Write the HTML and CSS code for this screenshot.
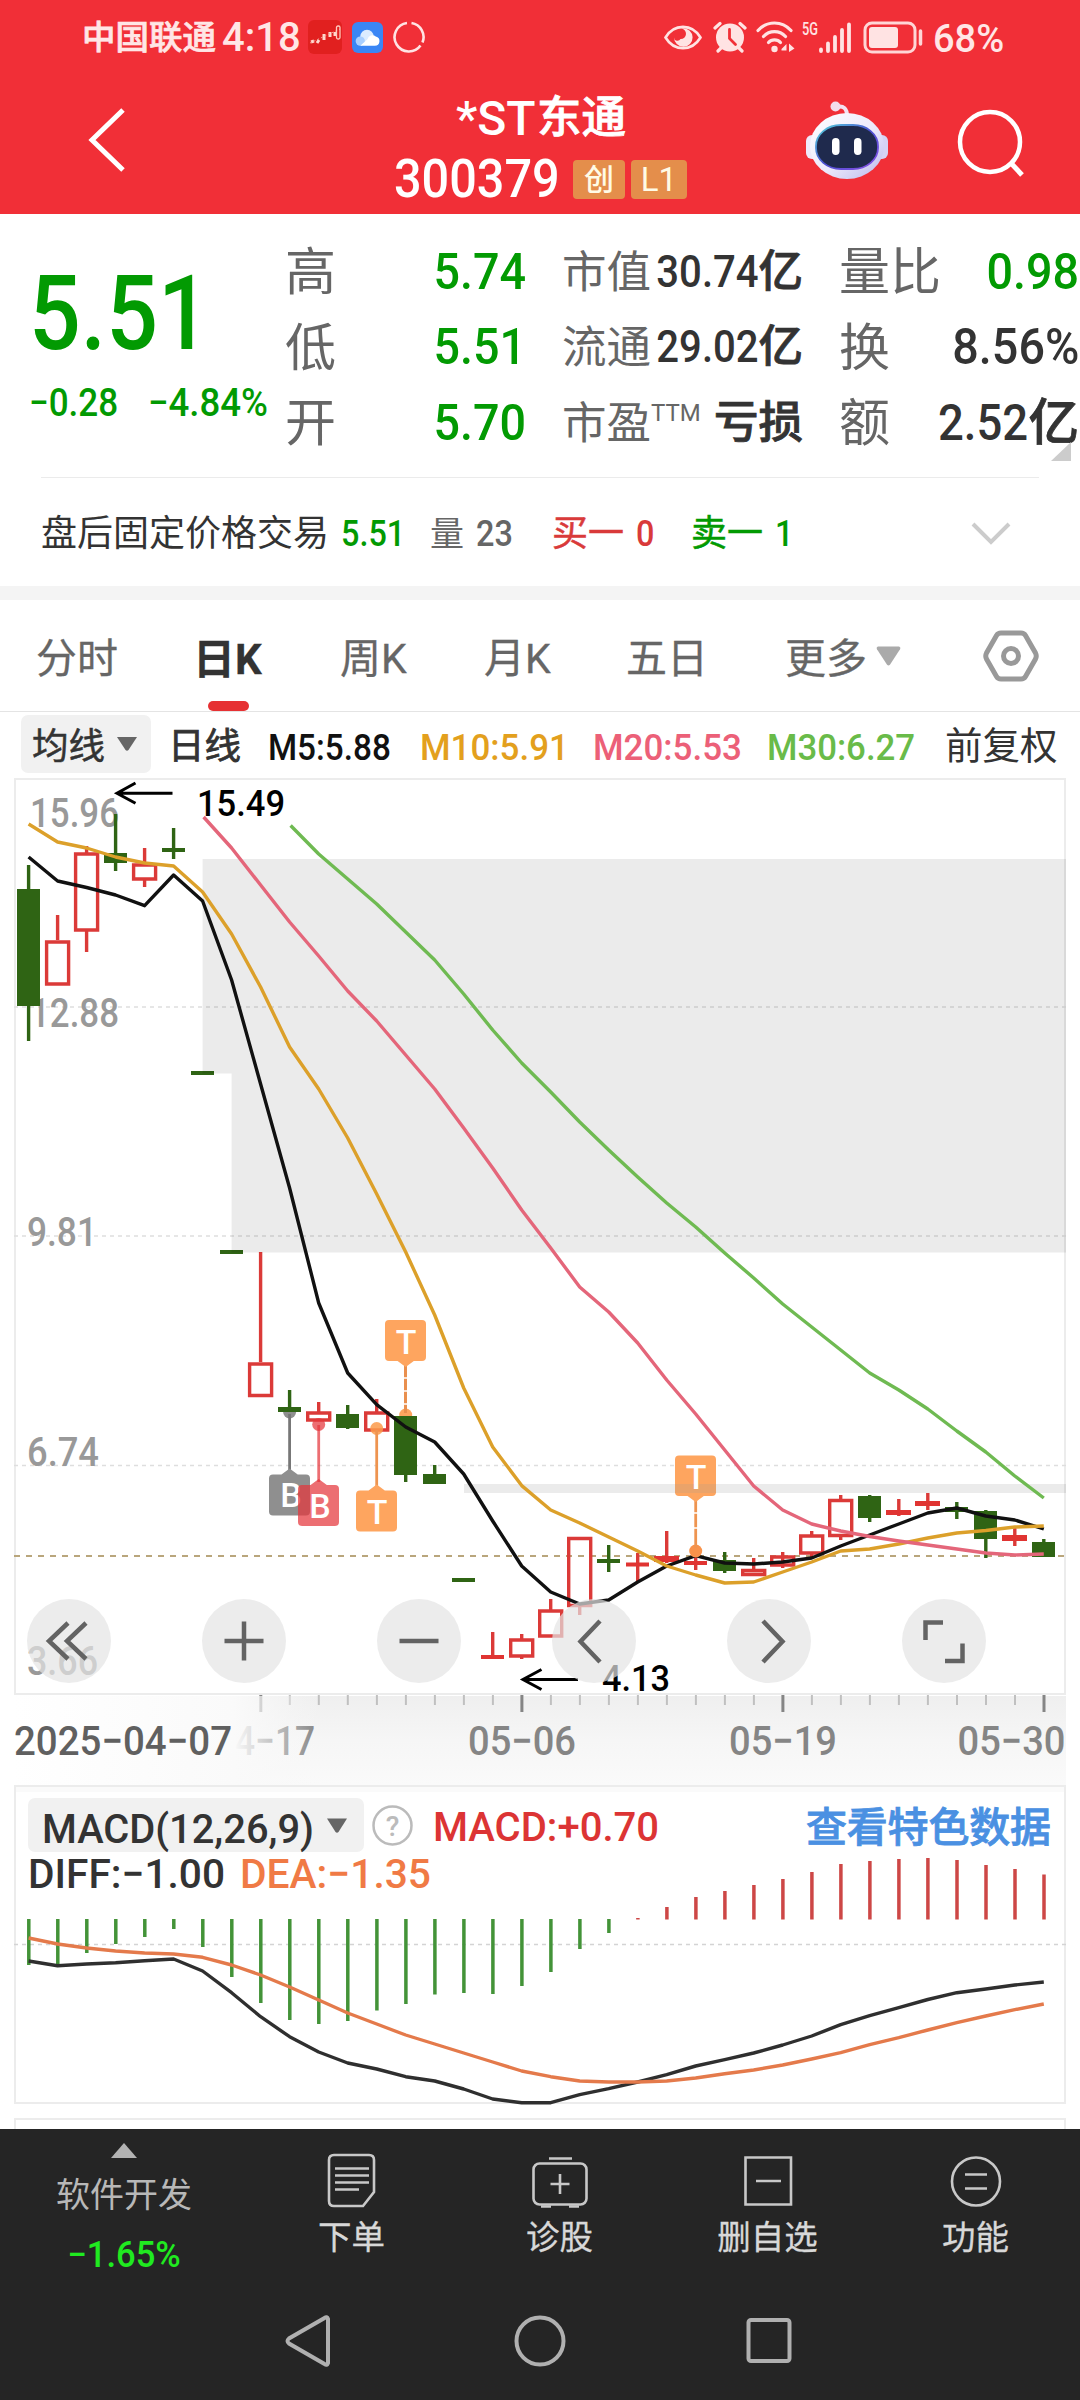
FILE: index.html
```html
<!DOCTYPE html>
<html lang="zh-CN">
<head>
<meta charset="utf-8">
<title>*ST东通 300379</title>
<link rel="stylesheet" href="styles.css">
</head>
<body>
<div class="app">
  <header class="top">
    <div class="status">
      <span class="carrier">中国联通</span>
      <span class="clock">4:18</span>
      <svg class="st-app" viewBox="0 0 34 34"><rect width="34" height="34" rx="6" fill="#e1201f"/><path d="M3 22l3-1M9 23l2-3M16 20v-6M22 17v-5M27 16v-4" stroke="#ffd9cf" stroke-width="3"/><path d="M2 23l30-14" stroke="#f4a294" stroke-width="1" stroke-dasharray="2 2"/><rect x="28.500" y="6" width="3.500" height="13" rx="1.500" fill="none" stroke="#ffc9bd" stroke-width="1.300"/></svg>
      <svg class="st-cloud" viewBox="0 0 30 30"><rect width="30" height="30" rx="6" fill="#3a86f5"/><circle cx="14.500" cy="14" r="6.500" fill="#dcecff"/><circle cx="8" cy="18.500" r="4.500" fill="#a9cfff"/><path d="M8 23h14a4.500 4.500 0 0 0 1-8.900 5 5 0 0 0-8 2.500z" fill="#fff"/></svg>
      <svg class="st-ring" viewBox="0 0 32 32"><g fill="none" stroke="#ffe3e3" stroke-width="2.600"><path d="M18.500 2A14.300 14.300 0 0 1 29.500 21.500"/><path d="M27.500 24.500A14.300 14.300 0 1 1 14 2"/></g></svg>
      <svg class="st-eye" viewBox="0 0 38 25"><path d="M1.500 12.500C10-1.700 28-1.700 36.500 12.500 28 26.700 10 26.700 1.500 12.500z" fill="none" stroke="#ffe3e3" stroke-width="2.600"/><path d="M19 3.200a9.300 9.300 0 1 1-9 9.300 3.500 3.500 0 0 0 6.500 1.500A5 5 0 0 0 17 3.500z" fill="#ffe3e3"/></svg>
      <svg class="st-alarm" viewBox="0 0 34 32"><circle cx="17" cy="16.500" r="14" fill="#ffe3e3"/><path d="M2 7l5-4.500M32 7l-5-4.500M5 30l4-4M29 30l-4-4" stroke="#ffe3e3" stroke-width="3.200" stroke-linecap="round"/><path d="M16.500 8.500v9l6 6" fill="none" stroke="#f12f37" stroke-width="2.800" stroke-linecap="round"/></svg>
      <svg class="st-wifi" viewBox="0 0 39 32"><g fill="none" stroke="#ffe3e3" stroke-width="3.200" stroke-linecap="round"><path d="M2 9.500C11-.5 26-.5 35 9.500"/><path d="M7.500 15.500c6-6.500 16-6.500 22 0"/><path d="M12.500 21.500c3-3.500 9-3.500 12 0"/></g><circle cx="18.500" cy="28" r="3.200" fill="#ffe3e3"/><path d="M25.500 28l5-5v6.500h-5zM33 22.500l5.500 5-5.500 3.500z" fill="#ffe3e3"/></svg>
      <svg class="st-signal" viewBox="0 -6 52 44"><text x="0" y="14" class="fiveg" textLength="16" lengthAdjust="spacingAndGlyphs">5G</text><path d="M19 28.500v1.500M26 22.500v7.500M33 16v14M40 9v21M47 3.500v26.500" stroke="#ffe3e3" stroke-width="3.800" stroke-linecap="round"/></svg>
      <svg class="st-batt" viewBox="0 0 62 33"><rect x="2" y="2" width="50" height="29" rx="7" fill="none" stroke="#ffd6d6" stroke-width="3"/><rect x="6" y="6" width="29" height="21" rx="3" fill="#ffe3e3"/><path d="M57.500 10v13" stroke="#ffd6d6" stroke-width="3.500" stroke-linecap="round"/></svg>
      <span class="pct">68%</span>
    </div>
    <div class="bar">
      <svg class="back" viewBox="0 0 40 66"><path d="M36 3L5 33l31 30" fill="none" stroke="#fff" stroke-width="5"/></svg>
      <div class="title">
        <h1 class="name"><span class="star">*ST</span>东通</h1>
        <div class="code"><span class="code-num num">300379</span><span class="badge b1">创</span><span class="badge b2">L1</span></div>
      </div>
      <svg class="robot" viewBox="0 0 82 78">
        <defs>
          <linearGradient id="head" x1="0" y1="0" x2="1" y2="1"><stop offset="0" stop-color="#fff"/><stop offset=".55" stop-color="#ece9fb"/><stop offset="1" stop-color="#b9b8ec"/></linearGradient>
          <linearGradient id="rim" x1="0" y1="0" x2="1" y2="1"><stop offset="0" stop-color="#55d7dc"/><stop offset=".5" stop-color="#4a4fd0"/><stop offset="1" stop-color="#8a4fe6"/></linearGradient>
        </defs>
        <path d="M30 6c8-2 11 2 11 9" fill="none" stroke="#f3e2f0" stroke-width="4"/>
        <circle cx="29.500" cy="5.500" r="5" fill="#f3dcec"/>
        <rect x="0" y="34" width="14" height="24" rx="6" fill="#efe9fa"/><rect x="68" y="34" width="14" height="24" rx="6" fill="#d6d3f4"/>
        <ellipse cx="41" cy="45" rx="37" ry="33" fill="url(#head)"/>
        <rect x="10" y="24" width="62" height="44" rx="25" ry="21" fill="#1f2a4d" stroke="url(#rim)" stroke-width="1.800"/>
        <rect x="26" y="37" width="7.500" height="17" rx="3.700" fill="#fff"/><rect x="48" y="37" width="7.500" height="17" rx="3.700" fill="#fff"/>
      </svg>
      <svg class="search" viewBox="0 0 68 70"><circle cx="33" cy="34" r="30" fill="none" stroke="#fff" stroke-width="4.500"/><path d="M53 54l12 13" stroke="#fff" stroke-width="5"/></svg>
    </div>
  </header>

  <section class="quote">
    <div class="price">
      <div class="last num">5.51</div>
      <div class="change"><span class="num ch1">−0.28</span><span class="num ch2">−4.84%</span></div>
    </div>
    <div class="stats">
      <div class="cell big"><span>高</span><b class="num green">5.74</b></div>
      <div class="cell mid"><span>市值</span><b><i class="num">30.74</i>亿</b></div>
      <div class="cell big"><span>量比</span><b class="num green">0.98</b></div>
      <div class="cell big"><span>低</span><b class="num green">5.51</b></div>
      <div class="cell mid"><span>流通</span><b><i class="num">29.02</i>亿</b></div>
      <div class="cell big"><span>换</span><b class="num">8.56%</b></div>
      <div class="cell big"><span>开</span><b class="num green">5.70</b></div>
      <div class="cell mid"><span>市盈<sup>TTM</sup></span><b>亏损</b></div>
      <div class="cell big"><span>额</span><b><i class="num">2.52</i>亿</b></div>
    </div>
    <svg class="corner" viewBox="0 0 20 19"><path d="M20 0v19H0z" fill="#ccc"/></svg>
  </section>

  <section class="after">
    <span class="a-name">盘后固定价格交易</span>
    <span class="num a-price">5.51</span>
    <span class="a-vol">量</span><span class="num a-voln">23</span>
    <span class="a-buy">买一</span><span class="num a-buyn">0</span>
    <span class="a-sell">卖一</span><span class="num a-selln">1</span>
    <svg class="chev" viewBox="0 0 40 24"><path d="M2 2l18 18L38 2" fill="none" stroke="#ccc" stroke-width="4"/></svg>
  </section>

  <nav class="tabs">
    <span class="tab t1">分时</span>
    <span class="tab t2 on">日K</span>
    <span class="tab t3">周K</span>
    <span class="tab t4">月K</span>
    <span class="tab t5">五日</span>
    <span class="tab t6">更多</span>
    <svg class="more" viewBox="0 0 26 20"><path d="M2 0h22q2 1 1 3L14.500 19q-1.500 1.500-3 0L1 3Q0 1 2 0z" fill="#aaa"/></svg>
    <svg class="hex" viewBox="0 0 56 52"><path d="M18 3h20q3 0 4.500 2.500L52.500 23q1.500 3 0 6L42.500 46.500Q41 49 38 49H18q-3 0-4.500-2.500L3.500 29q-1.500-3 0-6L13.500 5.500Q15 3 18 3z" fill="none" stroke="#999" stroke-width="5"/><circle cx="28" cy="26" r="7.500" fill="none" stroke="#999" stroke-width="5"/></svg>
  </nav>

  <div class="legend">
    <span class="pill"><span class="pill-t">均线</span><svg viewBox="0 0 20 14"><path d="M0 0h20L11.500 13q-1.500 1.500-3 0z" fill="#666"/></svg></span>
    <span class="l-day">日线</span>
    <span class="num l5">M5:5.88</span>
    <span class="num l10">M10:5.91</span>
    <span class="num l20">M20:5.53</span>
    <span class="num l30">M30:6.27</span>
    <span class="l-adj">前复权</span>
  </div>

  <section class="kline">
    <svg class="plot" viewBox="0 776 1080 1009">
      <defs>
        <linearGradient id="axisbg" x1="0" y1="0" x2="0" y2="1"><stop offset="0" stop-color="#efefef"/><stop offset=".5" stop-color="#f6f6f6"/><stop offset="1" stop-color="#fafafa"/></linearGradient>
        <linearGradient id="axisfade" x1="0" y1="0" x2="1" y2="0"><stop offset="0" stop-color="#fff"/><stop offset=".72" stop-color="#fafafa"/><stop offset="1" stop-color="#f8f8f8" stop-opacity="0"/></linearGradient>
      </defs>
      <rect x="14" y="1696" width="1052" height="89" fill="url(#axisbg)"/>
      <rect x="15" y="779" width="1050" height="915" fill="#fff" stroke="#ececec" stroke-width="2"/>
      <path d="M14 1007H1066M14 1236H1066M14 1465.500H1066" stroke="#dedede" stroke-width="1.300" stroke-dasharray="4 4"/>
      <path d="M14 1556H1066" stroke="#b9a67c" stroke-width="1.800" stroke-dasharray="6 6"/>

      <g class="ylab">
        <text x="30" y="827" textLength="89" lengthAdjust="spacingAndGlyphs">15.96</text>
        <text x="30" y="1027" textLength="89" lengthAdjust="spacingAndGlyphs">12.88</text>
        <text x="27" y="1246" textLength="70" lengthAdjust="spacingAndGlyphs">9.81</text>
        <text x="27" y="1466" textLength="72" lengthAdjust="spacingAndGlyphs">6.74</text>
        <text x="27" y="1675" textLength="71" lengthAdjust="spacingAndGlyphs">3.66</text>
      </g>

      <g fill="#fea55f" stroke="none">
        <circle cx="405.700" cy="1415" r="6.500"/>
        <path d="M404 1365h3v48h-3z" fill="#e98f4e"/>
      </g>

      <!-- falling days -->
      <path d="M28.600 865V1041M115.600 814V871M173.600 828V859M289.600 1390V1413M347.700 1405V1429M405.700 1416V1482M434.700 1465V1484M608.700 1545V1572M724.700 1552V1573M869.700 1495V1522M956.800 1502V1519M985.800 1510V1558M1043.800 1539V1557" stroke="#2f6414" stroke-width="3.400"/>
      <path d="M17 889h23v117h-23zM104 853h23v10h-23zM162 848h23v4h-23zM191 1071h23v4h-23zM220 1250h23v4h-23zM278 1407h23v5h-23zM336 1414h23v14h-23zM394 1416h23v59h-23zM423 1474h23v10h-23zM452 1578h23v4h-23zM597 1559h23v4h-23zM713 1560h23v11h-23zM858 1496h23v22h-23zM945 1507h23v5h-23zM974 1511h23v28h-23zM1032 1542h23v15h-23z" fill="#2f6414"/>
      <!-- rising days -->
      <path d="M57.600 915V940M86.600 846V853M86.600 931V952M144.600 848V864M144.600 880V887M260.600 1252V1362M318.700 1402V1413M376.700 1399V1413M492.700 1632V1656M521.700 1634V1639M521.700 1656V1659M550.700 1599V1610M579.700 1607V1615M637.700 1553V1581M666.700 1531V1563M695.700 1550V1570M753.700 1558V1570M782.700 1552V1568M811.700 1531V1535M811.700 1554V1557M840.700 1495V1500M840.700 1537V1540M898.800 1499V1516M927.800 1493V1510M1014.800 1526V1546" stroke="#db3a38" stroke-width="3.400"/>
      <path d="M46.600 942h22v42h-22zM75.600 854h22v76h-22zM133.600 865h22v14h-22zM249.600 1364h22v31.500h-22zM307.700 1413h22v7h-22zM365.700 1413h22v17h-22zM510.700 1640h22v16h-22zM539.700 1611h22v25h-22zM568.700 1538.500h22v67h-22zM742.700 1570.500h22v4h-22zM771.700 1557h22v8h-22zM800.700 1536h22v17h-22zM829.700 1500.500h22v35h-22z" fill="none" stroke="#db3a38" stroke-width="3.400"/>
      <path d="M481 1655h23v4h-23zM626 1562.500h23v4h-23zM654 1556h25v6h-25zM684 1561h23v4h-23zM886 1510h25v5h-25zM915 1501h25v5h-25zM1002 1535h25v6h-25z" fill="#e03432"/>

      <path d="M202.600 859H1066V1252.500H231.600V1073.500H202.600zM464 1484H1066V1493H464z" fill="#000" fill-opacity=".08"/>

      <g fill="none" stroke-width="3.400" stroke-linejoin="round">
        <path stroke="#111" d="M28.600 857L57.600 881 86.600 887.500 115.600 895 144.600 905.700 173.600 875 202.600 901 231.600 980 260.600 1084 289.600 1188 318.700 1303 347.700 1373 376.700 1404.600 405.700 1427 434.700 1442 463.700 1474 492.700 1521 521.700 1566 550.700 1592 579.700 1604 608.700 1600 637.700 1582 666.700 1566 695.700 1555.600 724.700 1563 753.700 1564 782.700 1562 811.700 1558 840.700 1546 869.700 1535 898.800 1524 927.800 1513 956.800 1508 985.800 1516 1014.800 1520 1043.800 1529"/>
        <path stroke="#dca02a" d="M28.600 824L57.600 842 86.600 848 115.600 857 144.600 863 173.600 866 202.600 892 231.600 934 260.600 987 289.600 1047 318.700 1089 347.700 1138 376.700 1194 405.700 1252 434.700 1315 463.700 1388 492.700 1447 521.700 1485.600 550.700 1510 579.700 1523 608.700 1537 637.700 1551 666.700 1566 695.700 1575 724.700 1583 753.700 1582 782.700 1572 811.700 1562 840.700 1551 869.700 1549 898.800 1544 927.800 1538 956.800 1533 985.800 1530.500 1014.800 1527 1043.800 1526"/>
        <path stroke="#e4667a" d="M203.600 817L231.600 848 260.600 885 289.600 922 318.700 956 347.700 991 376.700 1021 405.700 1055 434.700 1089 463.700 1128 492.700 1168 521.700 1210 550.700 1248 579.700 1287 608.700 1312 637.700 1343 666.700 1380 695.700 1414 724.700 1450 753.700 1486 782.700 1510 811.700 1524 840.700 1531 869.700 1536.500 898.800 1541 927.800 1545 956.800 1549 985.800 1553 1014.800 1555 1043.800 1554"/>
        <path stroke="#6fba52" d="M290.600 825.500L318.700 854 347.700 879 376.700 904 405.700 932 434.700 960 463.700 994 492.700 1030 521.700 1063 550.700 1092 579.700 1122 608.700 1150 637.700 1177 666.700 1203 695.700 1227 724.700 1253 753.700 1278 782.700 1304 811.700 1327 840.700 1350 869.700 1373 898.800 1390 927.800 1409 956.800 1431 985.800 1452 1014.800 1476 1043.800 1498"/>
      </g>

      <!-- trade markers -->
      <g class="mark">
        <g fill="#8f8f8f"><path d="M283.100 1412h13a6.500 6.500 0 0 1-13 0z"/><path d="M288.200 1414h2.800v57h-2.800z" fill="#777"/><path d="M273 1474.500h8.500l8.100-6 8.100 6H306a4 4 0 0 1 4 4V1511.500a4 4 0 0 1-4 4H273a4 4 0 0 1-4-4V1478.500a4 4 0 0 1 4-4z"/></g>
        <text x="291" y="1507">B</text>
        <g fill="#e5363c" fill-opacity=".72"><circle cx="318.700" cy="1424.500" r="6.500"/><path d="M317.300 1425h2.800v57h-2.800z"/><path d="M302 1485h8.600l8.100-6 8.100 6H335a4 4 0 0 1 4 4V1522a4 4 0 0 1-4 4H302a4 4 0 0 1-4-4V1489a4 4 0 0 1 4-4z"/></g>
        <text x="320" y="1518">B</text>
        <g fill="#fea55f"><circle cx="376.700" cy="1428.500" r="6.500" fill="#fb9a4a" fill-opacity=".85"/><path d="M375.300 1430h2.800v57h-2.800z" fill="#ee9450"/><path d="M360 1490.500h8.600l8.100-6 8.100 6H393a4 4 0 0 1 4 4V1527.500a4 4 0 0 1-4 4H360a4 4 0 0 1-4-4V1494.500a4 4 0 0 1 4-4z"/></g>
        <text x="377" y="1524">T</text>
        <g fill="#fea55f"><path d="M389 1320H422a4 4 0 0 1 4 4V1357a4 4 0 0 1-4 4H413.800l-8.100 6-8.100-6H389a4 4 0 0 1-4-4V1324a4 4 0 0 1 4-4z"/></g>
        <text x="406" y="1354">T</text>
        <g fill="#fea55f"><circle cx="695.700" cy="1551" r="6.500" fill="#f9924a"/><path d="M694.300 1500h2.800v48h-2.800z" fill="#ee9450"/><path d="M679 1455.500H712a4 4 0 0 1 4 4V1492a4 4 0 0 1-4 4H703.800l-8.100 6-8.100-6H679a4 4 0 0 1-4-4V1459.500a4 4 0 0 1 4-4z"/><path d="M675 1484h41v9h-41z" fill="#eaa36a"/></g>
        <text x="696" y="1489">T</text>
        <path d="M402 1378h8M402 1391h8M402 1404h8M692 1513h8M692 1528h8" stroke="#fff" stroke-width="1.300"/>
      </g>

      <g fill="none" stroke="#000" stroke-width="3"><path d="M172.500 793.300H117M135.500 783L117 793.300l18.500 10"/><path d="M578 1679.500H523M541.500 1669.500L523 1679.500l18.500 10"/></g>
      <g class="peak"><text x="197" y="815.500" textLength="88" lengthAdjust="spacingAndGlyphs">15.49</text><text x="602" y="1691" textLength="68" lengthAdjust="spacingAndGlyphs">4.13</text></g>

      <path d="M289.800 1695v10M318.800 1695v10M347.800 1695v10M376.900 1695v10M405.900 1695v10M434.900 1695v10M463.900 1695v10M492.900 1695v10M550.900 1695v10M579.900 1695v10M608.900 1695v10M637.900 1695v10M666.900 1695v10M695.900 1695v10M724.900 1695v10M753.900 1695v10M811.900 1695v10M840.900 1695v10M869.900 1695v10M898.900 1695v10M927.900 1695v10M957 1695v10M986 1695v10M1015 1695v10" stroke="#c0c0c0" stroke-width="2"/>
      <path d="M260.800 1695v17M521.900 1695v17M782.900 1695v17M1044 1695v17" stroke="#858585" stroke-width="3"/>
      <g class="xlab">
        <text x="235" y="1755" textLength="80" lengthAdjust="spacingAndGlyphs">4−17</text>
        <text x="468" y="1755" textLength="108" lengthAdjust="spacingAndGlyphs">05−06</text>
        <text x="729" y="1755" textLength="108" lengthAdjust="spacingAndGlyphs">05−19</text>
        <text x="957.500" y="1755" textLength="108" lengthAdjust="spacingAndGlyphs">05−30</text>
        <rect x="14" y="1696" width="305" height="89" fill="url(#axisfade)"/>
        <text class="first" x="14" y="1755" textLength="218" lengthAdjust="spacingAndGlyphs">2025−04−07</text>
      </g>
    </svg>
    <div class="controls">
      <svg viewBox="0 0 84 84"><path d="M41 24L22 42l19 18M59 24L40 42l19 18"/></svg>
      <svg viewBox="0 0 84 84"><path d="M22.500 42h39M42 22.500v39"/></svg>
      <svg viewBox="0 0 84 84"><path d="M22.500 42h39"/></svg>
      <svg viewBox="0 0 84 84"><path d="M48 22L28.500 42.500 48 63"/></svg>
      <svg viewBox="0 0 84 84"><path d="M36 22l19.500 20.500L36 63"/></svg>
      <svg viewBox="0 0 84 84"><path d="M41 23.500H23.500V41M43 62h17.500V44.500"/></svg>
    </div>
  </section>

  <section class="macd">
    <svg class="plot" viewBox="0 1785 1080 344">
      <rect x="15" y="1786" width="1050" height="317" fill="#fff" stroke="#ececec" stroke-width="2"/>
      <rect x="16" y="1787" width="1048" height="5" fill="#fafafa"/>
      <path d="M15 2135V2119H1065V2135" fill="none" stroke="#ececec" stroke-width="2"/>
      <path d="M14 1944.500H1066" stroke="#d4d4d4" stroke-width="1.300" stroke-dasharray="4 4"/>
      <rect x="28" y="1798" width="336" height="54" rx="7" fill="#f1f1f1"/>
      <path d="M327 1818.500h20L338.500 1832q-1.500 1.500-3 0z" fill="#666"/>
      <circle cx="392.500" cy="1825.500" r="19" fill="none" stroke="#bbb" stroke-width="2.500"/>
      <text class="q" x="392.500" y="1836">?</text>
      <g class="mlab">
        <text x="42" y="1843" textLength="272" lengthAdjust="spacingAndGlyphs" fill="#333">MACD(12,26,9)</text>
        <text x="433" y="1841" textLength="226" lengthAdjust="spacingAndGlyphs" fill="#dc3434">MACD:+0.70</text>
        <text x="28" y="1887.500" textLength="197" lengthAdjust="spacingAndGlyphs" fill="#333">DIFF:−1.00</text>
        <text x="240" y="1887.500" textLength="191" lengthAdjust="spacingAndGlyphs" fill="#f07a45">DEA:−1.35</text>
        <text x="806" y="1841.500" textLength="245" fill="#4a90e2" stroke="#4a90e2" stroke-width=".8">查看特色数据</text>
      </g>
      <path d="M28.800 1919V1965M57.800 1919V1965M86.800 1919V1953M115.800 1919V1944M144.800 1919V1937M173.800 1919V1929M202.800 1919V1947M231.800 1919V1977M260.800 1919V2003M289.800 1919V2020M318.800 1919V2024M347.800 1919V2021M376.900 1919V2010.500M405.900 1919V2004M434.900 1919V1994.500M463.900 1919V1993M492.900 1919V1994M521.900 1919V1986M550.900 1919V1972M579.900 1919V1949M608.900 1919V1933" stroke="#439338" stroke-width="3.500"/>
      <path d="M637.900 1919.500V1918M666.900 1919.500V1907M695.900 1919.500V1897M724.900 1919.500V1891M753.900 1919.500V1885M782.900 1919.500V1879M811.900 1919.500V1872M840.900 1919.500V1864M869.900 1919.500V1861M898.900 1919.500V1859M927.900 1919.500V1858M957 1919.500V1860M986 1919.500V1865M1015 1919.500V1869M1044 1919.500V1874.500" stroke="#cd4746" stroke-width="3.500"/>
      <g fill="none" stroke-width="3.400" stroke-linejoin="round">
        <path stroke="#2f2f2f" d="M28.600 1961L57.600 1965.700 86.600 1964 115.600 1962.700 144.600 1960.700 173.600 1959 202.600 1971 231.600 1992.700 260.600 2016.700 289.600 2036.700 318.700 2052 347.700 2063 376.700 2069 405.700 2076.700 434.700 2081 463.700 2089 492.700 2099 521.700 2102.700 550.700 2102.700 579.700 2094.700 608.700 2088.700 637.700 2082 666.700 2074.700 695.700 2066 724.700 2059.700 753.700 2053 782.700 2045 811.700 2036 840.700 2024.700 869.700 2015.700 898.800 2007.700 927.800 1999.500 956.800 1992.700 985.800 1989 1014.800 1985 1043.800 1982"/>
        <path stroke="#e47a4b" d="M28.600 1938L57.600 1944 86.600 1948 115.600 1951 144.600 1953 173.600 1954 202.600 1957.300 231.600 1965 260.600 1975 289.600 1987 318.700 2000 347.700 2013 376.700 2024 405.700 2035 434.700 2044 463.700 2053 492.700 2062 521.700 2071 550.700 2076.700 579.700 2081 608.700 2082 637.700 2082 666.700 2081 695.700 2078 724.700 2073.700 753.700 2070 782.700 2065 811.700 2059 840.700 2052.700 869.700 2044.700 898.800 2037.700 927.800 2030 956.800 2022.700 985.800 2016 1014.800 2009.700 1043.800 2004"/>
      </g>
    </svg>
  </section>

  <footer class="dock">
    <div class="actions">
      <div class="idx"><svg viewBox="0 0 26 15"><path d="M13 0l13 15H0z" fill="#b3b3b3"/></svg><span class="idx-n">软件开发</span><span class="idx-v num">−1.65%</span></div>
      <div class="act"><svg viewBox="0 0 60 60"><path d="M12 4h35q5 0 5 5v32L41 55H12q-5 0-5-5V9q0-5 5-5z"/><path d="M13 17.500h34M13 24.500h34M13 31.500h34M13 38.500h24"/></svg><span>下单</span></div>
      <div class="act"><svg viewBox="0 0 60 60"><rect x="3.500" y="12.500" width="53" height="41" rx="6"/><path d="M19 7.500h23M30 23v20M20.500 33h19M11 55.500h10M39 55.500h10"/></svg><span>诊股</span></div>
      <div class="act"><svg viewBox="0 0 60 60"><path d="M7.500 6.500h45.500v47H7.500zM18 30h25"/></svg><span>删自选</span></div>
      <div class="act"><svg viewBox="0 0 60 60"><circle cx="30" cy="30.500" r="24"/><path d="M19 23.500h22M19 37.500h22"/></svg><span>功能</span></div>
    </div>
    <div class="sys">
      <svg viewBox="0 0 60 60"><path d="M49 8v44q-1 3-3.500 1L10 32.500q-3-2.500 0-5L45.500 7q2.500-2 3.500 1z"/></svg>
      <svg viewBox="0 0 60 60"><circle cx="30" cy="30" r="23.500"/></svg>
      <svg viewBox="0 0 60 60"><rect x="7.500" y="9" width="41" height="41" rx="2.500"/></svg>
    </div>
  </footer>
</div>
</body>
</html>
```
FILE: styles.css
```css
* { box-sizing: border-box; }
body { margin: 0; background: #fff; }
.app {
  width: 1080px; height: 2400px; overflow: hidden;
  display: flex; flex-direction: column;
  font-family: Roboto, "Noto Sans CJK SC", sans-serif;
  line-height: 1; color: #333; white-space: nowrap;
}
svg { display: block; flex: none; }
span, b, i { flex: none; }
b, i { font-weight: 500; font-style: normal; }
.num { display: inline-block; font-weight: 500; transform: scaleX(.9); transform-origin: 0 50%; }
.green { color: #029a02; }

/* header */
.top { height: 214px; background: #f12f37; color: #fff; }
.status { height: 74px; padding-left: 82px; display: flex; align-items: center; color: #ffe6e6; }
.carrier { width: 140px; font-size: 33.5px; font-weight: 500; padding-top: 2px; -webkit-text-stroke: .7px; }
.clock { width: 86px; font-size: 40px; font-weight: 500; padding-top: 2px; }
.st-app { width: 34px; height: 34px; margin-right: 10px; }
.st-cloud { width: 31px; height: 31px; margin-right: 10px; }
.st-ring { width: 32px; height: 32px; margin-right: 239px; }
.st-eye { width: 38px; height: 25px; margin-right: 11px; }
.st-alarm { width: 34px; height: 32px; margin-right: 9px; }
.st-wifi { width: 39px; height: 32px; margin-right: 7px; }
.st-signal { width: 52px; height: 44px; margin-right: 9px; }
.st-batt { width: 62px; height: 33px; margin-right: 8px; }
.fiveg { font: 500 18px Roboto, sans-serif; fill: #ffe3e3; }
.pct { font-size: 38px; font-weight: 500; padding-top: 3px; }
.bar { height: 140px; display: flex; align-items: flex-start; }
.back { width: 40px; height: 66px; margin: 33px 0 0 87px; }
.title { width: 450px; margin: 14px 0 0 187px; display: flex; flex-direction: column; padding-left: 80px; }
.name { margin: 0; padding-left: 62px; font-size: 44.5px; font-weight: 500; height: 61px; display: flex; align-items: center; -webkit-text-stroke: .8px; }
.star { font-size: 48px; width: 81px; -webkit-text-stroke: 0; }
.code { display: flex; align-items: center; height: 50px; margin-top: 5px; }
.code-num { width: 179px; font-size: 54px; }
.badge { height: 39px; border-radius: 4px; background: #e48e4b; color: #fffbe6; font-size: 30px; font-weight: 500; display: flex; align-items: center; justify-content: center; }
.b1 { width: 52px; margin-right: 6px; padding-top: 2px; }
.b2 { width: 56px; font-size: 33px; font-weight: 400; }
.robot { width: 82px; height: 78px; margin: 27px 0 0 42px; }
.search { width: 68px; height: 70px; margin: 34px 0 0 69px; }

/* quote */
.quote { position: relative; height: 263px; display: flex; }
.quote::after { content: ""; position: absolute; left: 41px; right: 41px; bottom: -1px; height: 1px; background: #ebebeb; }
.price { width: 285px; padding-left: 29px; color: #029a02; }
.last { font-size: 103px; margin-top: 48px; transform: scaleX(.885); }
.change { display: flex; margin-top: 19px; font-size: 38.5px; }
.ch1 { width: 119px; transform: scaleX(.91); }
.ch2 { transform: scaleX(.95); }
.stats { display: grid; grid-template-columns: 241px 241px 240px; grid-template-rows: repeat(3, 75.5px); column-gap: 36px; padding-top: 19px; }
.cell { display: flex; justify-content: space-between; align-items: center; }
.cell span { color: #666; padding-top: 4px; }
.cell .num { transform-origin: 100% 50%; }
.big { font-size: 50.5px; }
.big span { font-size: 51px; }
.big b.num { transform: scaleX(.925); }
.mid { font-size: 44.5px; }
.mid i { margin-left: -20px; }
.cell b { color: #333; padding-top: 2px; -webkit-text-stroke: .8px; }
.cell .num { -webkit-text-stroke: 0; }
.cell b.green { color: #029a02; }
.mid sup { font-size: 24px; vertical-align: 18px; line-height: 0; }
.corner { position: absolute; left: 1051px; top: 228px; width: 20px; height: 19px; }

/* after-hours row */
.after { height: 123px; padding: 4px 69px 0 41px; display: flex; align-items: center; font-size: 36px; border-bottom: 14px solid #f4f4f4; }
.a-name { width: 300px; }
.a-price { width: 89px; color: #029a02; }
.a-vol { width: 46px; color: #666; font-size: 34px; }
.a-voln { width: 76px; color: #666; }
.a-buy { width: 84px; color: #d93a3a; -webkit-text-stroke: .5px; }
.a-buyn { width: 55px; color: #d93a3a; }
.a-sell { width: 84px; color: #029a02; -webkit-text-stroke: .5px; }
.a-selln { color: #029a02; }
.chev { width: 40px; height: 24px; margin-left: auto; }

/* tabs */
.tabs { height: 112px; display: flex; align-items: center; padding-left: 36px; font-size: 41px; color: #666; border-bottom: 1px solid #e4e4e4; }
.tab { height: 111px; padding-top: 39px; -webkit-text-stroke: .3px; }
.t1 { width: 157px; }
.t2 { width: 147px; }
.t3 { width: 144px; }
.t4 { width: 142px; }
.t5 { width: 159px; }
.t6 { width: 91px; }
.on { position: relative; color: #333; font-weight: 700; font-size: 42px; }
.on::after { content: ""; position: absolute; left: 15px; bottom: 0; width: 41px; height: 10px; border-radius: 5px; background: #e63133; }
.more { width: 25px; height: 20px; }
.hex { width: 56px; height: 52px; margin-left: 82px; }

/* legend */
.legend { height: 64px; display: flex; align-items: center; padding-left: 21px; font-size: 37px; }
.legend > .num, .l-day, .l-adj, .pill-t { padding-top: 6px; }
.pill { width: 130px; height: 58px; margin-right: 17px; padding-left: 11px; border-radius: 7px; background: #f1f1f1; display: flex; align-items: center; gap: 12px; }
.pill svg { width: 20px; height: 14px; }
.pill-t { font-size: 36.5px; -webkit-text-stroke: .5px; }
.l-day { width: 100px; font-size: 36.5px; -webkit-text-stroke: .8px; }
.l5 { width: 152px; color: #111; }
.legend .l10 { width: 173px; color: #e3a01d; transform: scaleX(.945); }
.legend .l20 { width: 174px; color: #ec6078; transform: scaleX(.945); }
.legend .l30 { width: 178px; color: #69bb49; transform: scaleX(.94); }
.l-adj { font-size: 37.5px; }

/* charts */
.kline { position: relative; height: 1009px; }
.plot { width: 1080px; }
.kline .plot { height: 1009px; }
.macd, .macd .plot { height: 344px; }
svg text { font-family: Roboto, "Noto Sans CJK SC", sans-serif; font-weight: 500; }
.ylab { font-size: 41px; fill: #999; }
.peak { font-size: 37px; }
.xlab { font-size: 41px; fill: #858585; }
.first { fill: #606060; }
.mark text { font-size: 34px; fill: #fff; text-anchor: middle; }
.mlab { font-size: 41px; }
.q { font-size: 28px; fill: #bbb; text-anchor: middle; }
.controls { position: absolute; left: 26.5px; top: 822.5px; display: flex; gap: 91px; }
.controls svg { width: 84px; height: 84px; border-radius: 50%; background: rgba(228, 228, 228, .7); fill: none; stroke: #636363; stroke-width: 4.5; }

/* dock */
.dock { height: 271px; background: #252525; color: #d8d8d8; }
.actions { height: 154px; padding-left: 20px; display: flex; }
.idx { width: 208px; display: flex; flex-direction: column; align-items: center; color: #b8b8b8; }
.idx svg { width: 26px; height: 15px; margin: 14px 0 20px; }
.idx-n { font-size: 34px; }
.idx-v { margin-top: 25px; font-size: 36px; color: #20ea20; transform: scaleX(.96); transform-origin: 50% 50%; }
.act { width: 208px; padding: 22px 0 0 39px; display: flex; flex-direction: column; align-items: center; gap: 10px; font-size: 33.5px; -webkit-text-stroke: .3px; }
.act svg { width: 60px; height: 60px; fill: none; stroke: #c8c8c8; stroke-width: 2.6; }
.sys { display: flex; justify-content: center; gap: 171px; padding-top: 28px; }
.sys svg { width: 60px; height: 60px; fill: none; stroke: #b0b0b0; stroke-width: 4; }
```
